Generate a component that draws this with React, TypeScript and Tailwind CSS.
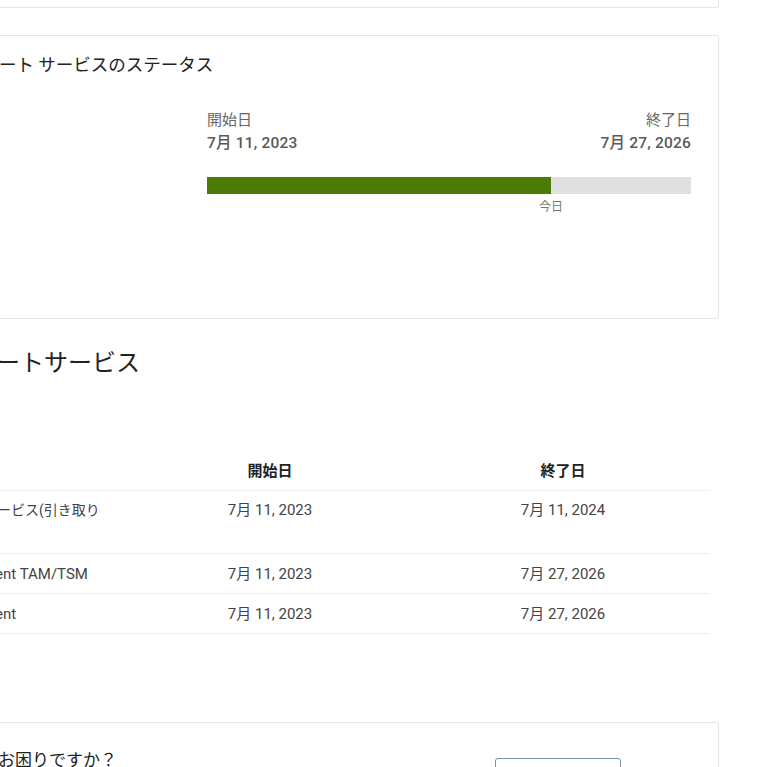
import React from "react";

const font = { fontFamily: 'Roboto, "Noto Sans CJK JP", "Noto Sans", sans-serif' };

const rows = [
  { name: "ハードウェア保守・サポートサービス(引き取り修理)", start: "7月 11, 2023", end: "7月 11, 2024", tall: true },
  { name: "Technical Account Management TAM/TSM", start: "7月 11, 2023", end: "7月 27, 2026", tall: false },
  { name: "Technical Account Management", start: "7月 11, 2023", end: "7月 27, 2026", tall: false },
];

export default function App() {
  return (
    <div className="w-[767px] h-[767px] overflow-hidden bg-white text-[#222]" style={font}>
      <div className="ml-[-52px] w-[771px]">
        {/* previous card (mostly scrolled away) */}
        <div className="-mt-[92px] h-[100px] border border-[#e6e6e6] rounded-[2px] bg-white" />

        {/* status card */}
        <div className="mt-[27px] h-[284px] border border-[#e6e6e6] rounded-[2px] pl-[15px] pr-[26px] pt-[17px]">
          <div className="text-[17.5px] leading-[24px] text-[#222]">サポート サービスのステータス</div>
          <div className="mt-[33px] flex">
            <div className="w-[243px] shrink-0" />
            <div className="w-[484px]">
              <div className="flex justify-between">
                <div>
                  <div className="text-[15px] leading-[20px] text-[#666]">開始日</div>
                  <div className="mt-[3px] text-[15.5px] leading-[20px] font-medium tracking-[0.2px] text-[#5a5a5a]">7月 11, 2023</div>
                </div>
                <div className="text-right">
                  <div className="text-[15px] leading-[20px] text-[#666]">終了日</div>
                  <div className="mt-[3px] text-[15.5px] leading-[20px] font-medium tracking-[0.2px] text-[#5a5a5a]">7月 27, 2026</div>
                </div>
              </div>
              <div className="mt-[24px] h-[17px] bg-[#e0e0e0] flex">
                <div className="w-[344px] h-full bg-[#4b7b02]" />
              </div>
              <div className="mt-[5px] ml-[332px] text-[12px] leading-[16px] text-[#777]">今日</div>
            </div>
          </div>
        </div>

        {/* heading */}
        <h2 className="mt-[28px] text-[24px] leading-[32px] font-normal text-[#222]">サポートサービス</h2>

        {/* table */}
        <div className="mt-[72px] ml-[-163px] w-[925px]">
          <div className="grid grid-cols-[339px_292px_294px] h-[40px] items-center border-b border-[#eeeeee] text-[15px] leading-[20px] font-bold text-[#222]">
            <div className="pl-4 pr-[13px]">サービス</div>
            <div className="text-center">開始日</div>
            <div className="text-center">終了日</div>
          </div>
          {rows.map((r, i) => (
            <div
              key={i}
              className={
                r.tall
                  ? "grid grid-cols-[339px_292px_294px] h-[63px] items-start pt-[9px] border-b border-[#eeeeee] text-[15px] leading-[20px] text-[#444]"
                  : "grid grid-cols-[339px_292px_294px] h-[40px] items-center border-b border-[#eeeeee] text-[15px] leading-[20px] text-[#444]"
              }
            >
              <div className={r.tall ? "pl-4 pr-[13px] text-[14px]" : "pl-4 pr-[13px]"}>{r.name}</div>
              <div className="text-center">{r.start}</div>
              <div className="text-center">{r.end}</div>
            </div>
          ))}
        </div>

        {/* help card */}
        <div className="mt-[88px] h-[120px] border border-[#e6e6e6] rounded-[2px] pl-[15px] flex items-start pt-[25px]">
          <div className="text-[17px] leading-[24px] text-[#222]">何かお困りですか？</div>
          <button className="ml-auto mr-[97px] mt-[10px] w-[126px] h-[36px] border border-[#7890a8] rounded-[3px] bg-white text-[14px] text-[#2d5d8a] pt-[22px]">
            お問い合わせ
          </button>
        </div>
      </div>
    </div>
  );
}
